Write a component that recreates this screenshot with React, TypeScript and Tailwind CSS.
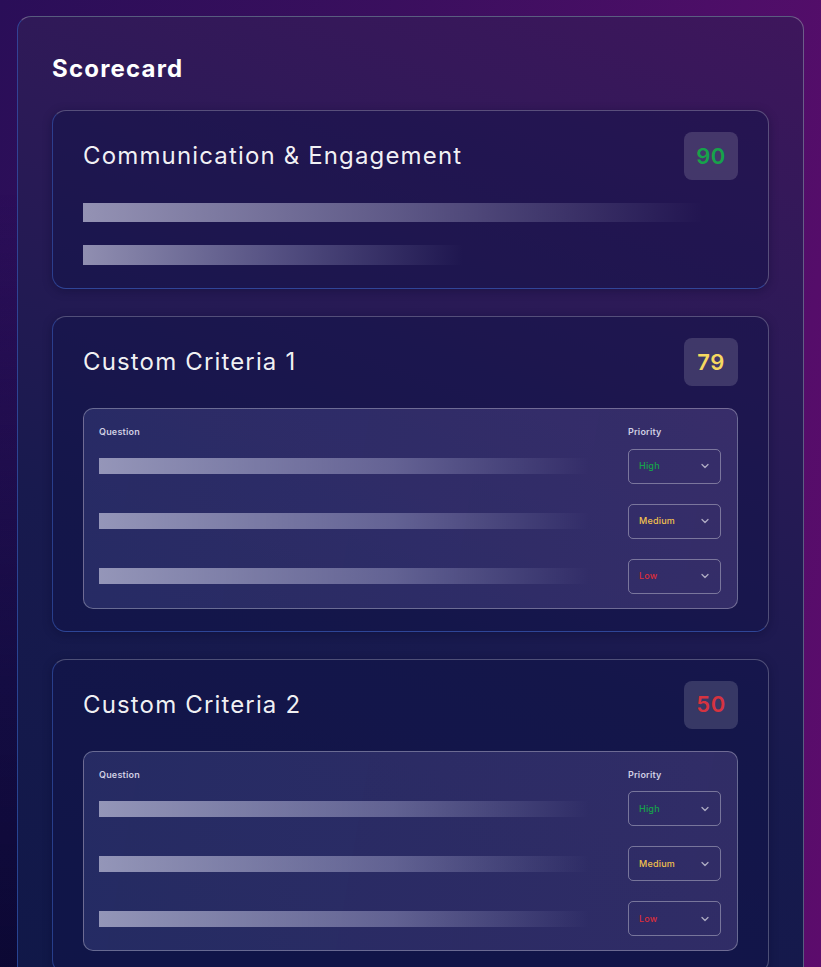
import React from "react";

type Row = { label: "High" | "Medium" | "Low" };

const priorityColor: Record<Row["label"], string> = {
  High: "text-[#16a34a]",
  Medium: "text-[#f2c14e]",
  Low: "text-[#dc2e3a]",
};

function Chevron() {
  return (
    <svg width="10" height="10" viewBox="0 0 10 10" fill="none" className="text-white/60">
      <path d="M2 3.5 L5 6.5 L8 3.5" stroke="currentColor" strokeWidth="1.3" strokeLinecap="round" strokeLinejoin="round" />
    </svg>
  );
}

function ScoreBadge({ value, color }: { value: number; color: string }) {
  return (
    <div className="flex h-12 w-[54px] items-center justify-center rounded-lg bg-white/15">
      <span className={`text-[22px] font-semibold tracking-[0.5px] ${color}`}>{value}</span>
    </div>
  );
}

function CardShell({ children, bottom = "pb-[22px]" }: { children: React.ReactNode; bottom?: string }) {
  return (
    <div className={`rounded-[14px] border border-white/25 border-l-[#3a5ab8]/60 border-b-[#3a5ab8]/70 bg-[rgba(16,18,72,0.45)] px-[30px] pt-[21px] ${bottom} shadow-[0_2px_10px_rgba(10,10,40,0.35)]`}>
      {children}
    </div>
  );
}

function CardHeader({ title, score, color }: { title: string; score: number; color: string }) {
  return (
    <div className="flex items-center justify-between">
      <h2 className="text-[24px] font-normal tracking-[1.15px] text-white/95">{title}</h2>
      <ScoreBadge value={score} color={color} />
    </div>
  );
}

function CriteriaCard({ title, score, color }: { title: string; score: number; color: string }) {
  const rows: Row[] = [{ label: "High" }, { label: "Medium" }, { label: "Low" }];
  return (
    <CardShell>
      <CardHeader title={title} score={score} color={color} />
      <div className="mt-[22px] rounded-[10px] border border-white/30 bg-[linear-gradient(100deg,rgba(90,100,170,0.28),rgba(120,100,170,0.3))] pt-[16px] pr-[16px] pb-[14px] pl-[15px]">
        <div className="flex items-center justify-between text-[9px] font-semibold tracking-[0.2px] text-[#cfcfe2]">
          <span>Question</span>
          <span className="w-[93px]">Priority</span>
        </div>
        <div className="mt-[10px] flex flex-col gap-[20px]">
          {rows.map((r) => (
            <div key={r.label} className="flex items-center justify-between">
              <div className="h-4 w-[490px] bg-gradient-to-r from-[rgba(205,205,228,0.66)] via-[rgba(180,180,215,0.4)] via-60% to-transparent" />
              <div className="flex h-[35px] w-[93px] items-center justify-between rounded-[5px] border border-white/35 pr-[10px] pl-[10px]">
                <span className={`text-[9px] font-medium tracking-[0.2px] ${priorityColor[r.label]}`}>{r.label}</span>
                <Chevron />
              </div>
            </div>
          ))}
        </div>
      </div>
    </CardShell>
  );
}

export default function App() {
  return (
    <main
      className="relative h-[967px] w-full overflow-hidden bg-[linear-gradient(100deg,#2a0e58_0%,#3a0f5e_40%,#4e0e68_75%,#5c0c6c_100%)]"
      style={{ fontFamily: "Inter, 'Noto Sans', sans-serif" }}
    >
      <div className="absolute inset-0 bg-[linear-gradient(to_bottom,transparent_20%,rgba(12,12,60,0.75)_70%,rgba(8,8,48,0.9)_100%)] [mask-image:linear-gradient(to_right,black_0%,black_30%,transparent_80%)]" />
      <div className="relative px-[17px] pt-4">
        <section className="h-[980px] w-[787px] rounded-[14px] border border-white/30 border-l-[#2f56b0]/70 bg-[linear-gradient(200deg,#3e165c_0%,#2c1a57_28%,#181a4e_60%,#101848_100%)] px-[34px] pt-[34px]">
          <h1 className="text-[24px] font-bold tracking-[1.2px] text-white">Scorecard</h1>
          <div className="mt-[23px] flex flex-col gap-[27px]">
            <CardShell bottom="pb-[23px]">
              <CardHeader title="Communication & Engagement" score={90} color="text-[#16a34a]" />
              <div className="mt-[23px] flex flex-col gap-[23px]">
                <div className="h-[19px] w-[620px] bg-gradient-to-r from-[rgba(205,205,228,0.68)] via-[rgba(190,190,220,0.4)] to-transparent" />
                <div className="h-[20px] w-[380px] bg-gradient-to-r from-[rgba(205,205,228,0.66)] via-[rgba(170,170,210,0.4)] to-transparent" />
              </div>
            </CardShell>
            <CriteriaCard title="Custom Criteria 1" score={79} color="text-[#f6d860]" />
            <CriteriaCard title="Custom Criteria 2" score={50} color="text-[#d63340]" />
          </div>
        </section>
      </div>
    </main>
  );
}
